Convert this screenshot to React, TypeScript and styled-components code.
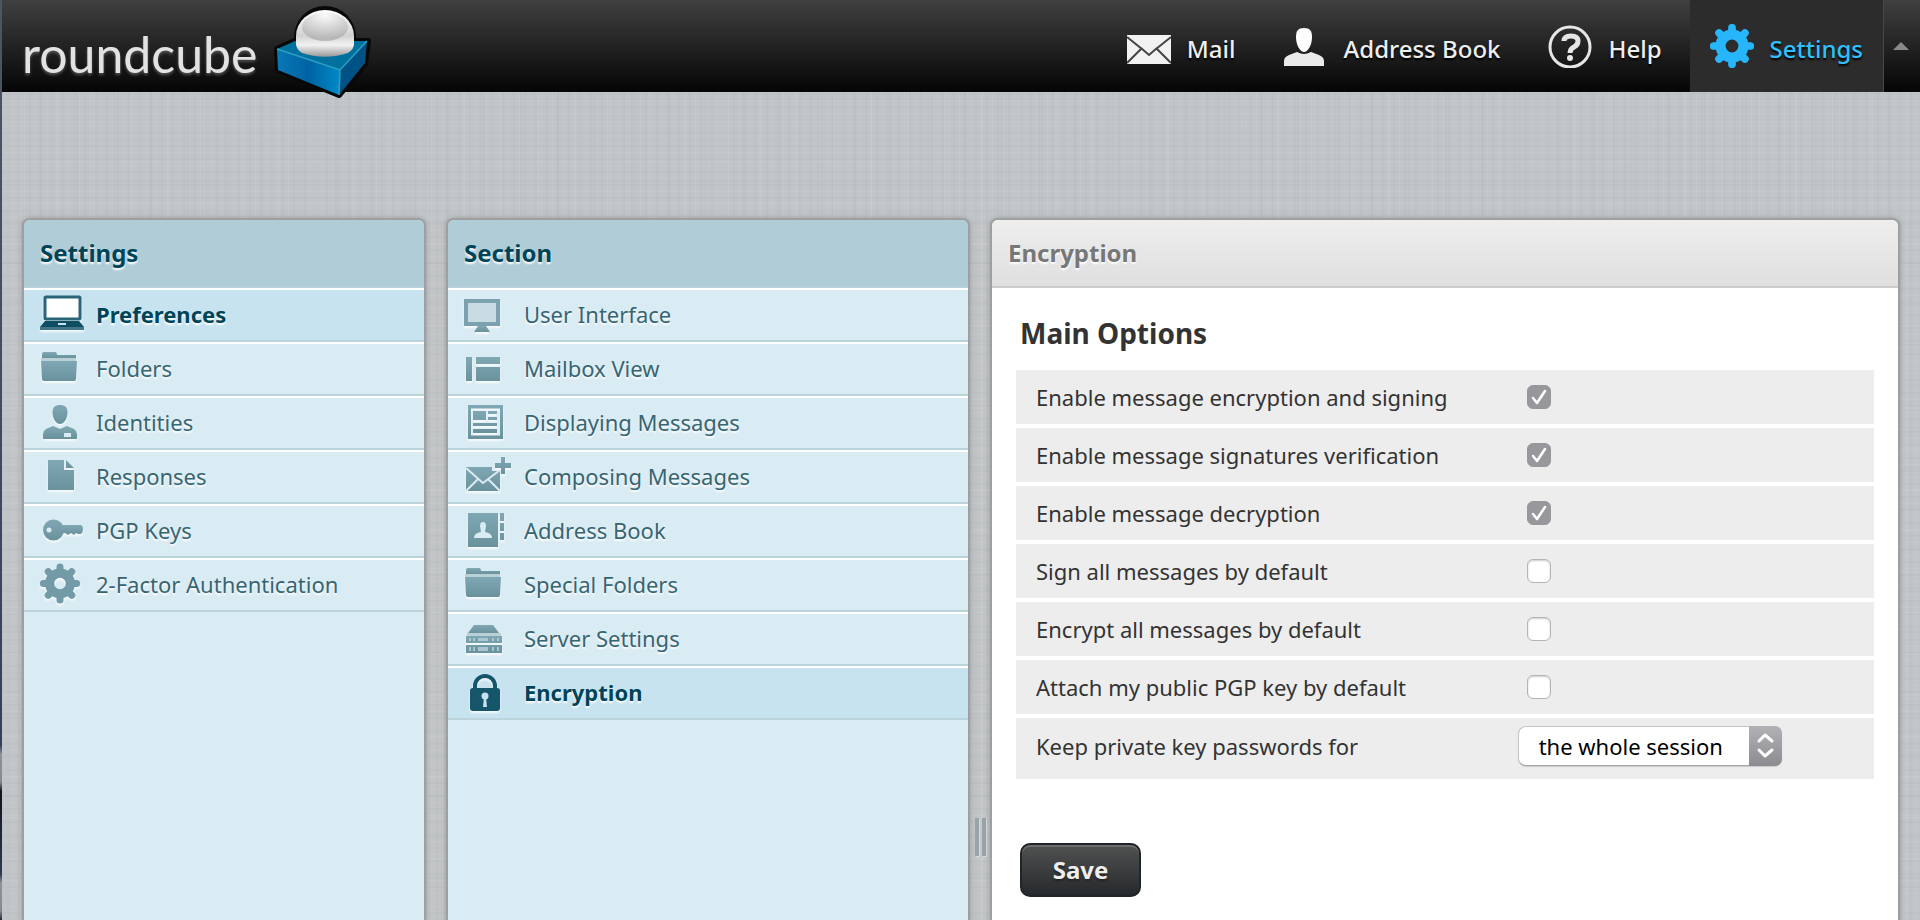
import React, { useState } from 'react';
import styled, { createGlobalStyle, css } from 'styled-components';

const sans = '"Noto Sans", "Open Sans", "Lucida Grande", sans-serif';

const GlobalStyle = createGlobalStyle`
  *, *::before, *::after { box-sizing: border-box; }
  body { margin: 0; font-family: ${sans}; font-size: 22px; color: #333; }
  a { text-decoration: none; color: inherit; }
  ul { list-style: none; margin: 0; padding: 0; }
  h1, h2 { margin: 0; }
`;

const Screen = styled.div`
  display: flex;
  height: 100vh;
  overflow: hidden;
`;

const DesktopEdge = styled.div`
  flex: 0 0 2px;
  background: linear-gradient(#4d5666 0%, #434c60 40%, #343f5c 81%, #8f9396 82%, #85898c 85%, #10141c 86%, #2c3a50 95%, #8f9396 96%, #85898c 99%, #20283a 100%);
`;

const Page = styled.div`
  flex: 1;
  min-width: 0;
  display: flex;
  flex-direction: column;
  background-color: #c1c5c8;
  background-image:
    repeating-linear-gradient(90deg, rgba(255, 255, 255, 0.05) 0 1px, transparent 1px 5px, rgba(90, 100, 110, 0.03) 5px 7px, transparent 7px 11px),
    repeating-linear-gradient(0deg, rgba(255, 255, 255, 0.05) 0 1px, transparent 1px 6px, rgba(90, 100, 110, 0.03) 6px 8px, transparent 8px 13px),
    repeating-linear-gradient(90deg, rgba(90, 100, 110, 0.03) 0 2px, transparent 2px 17px, rgba(255, 255, 255, 0.05) 17px 19px, transparent 19px 37px),
    repeating-linear-gradient(0deg, rgba(90, 100, 110, 0.03) 0 2px, transparent 2px 19px, rgba(255, 255, 255, 0.05) 19px 21px, transparent 21px 41px);
`;

const Header = styled.header`
  flex: 0 0 92px;
  display: flex;
  justify-content: space-between;
  background: linear-gradient(#404040, #050505);
`;

const LogoLink = styled.a`
  display: flex;
  align-items: flex-start;
  gap: 16px;
  height: 92px;
  padding: 4px 0 0 20px;
  font-family: Lato, sans-serif;
  font-size: 50px;
  color: #e2e2e2;
  text-shadow: 0 2px 3px #555;

  span { line-height: 100px; }
  svg { flex: none; }
`;

const Nav = styled.nav`
  display: flex;
  gap: 8px;
`;

const NavItem = styled.a<{ $active?: boolean }>`
  display: flex;
  align-items: center;
  gap: 16px;
  padding: 0 20px;
  font-size: 24px;
  font-weight: 500;
  line-height: 32px;
  color: #eee;
  text-shadow: 0 2px 2px #000;
  ${(p) => p.$active && css`
    background: #2c2c2c;
    color: #30c0fc;
    border-right: 1px solid #484848;
  `}
  span { padding-top: 6px; }
`;

const TopToggle = styled.button`
  width: 36px;
  margin-left: -8px;
  padding: 0 2px 0 0;
  border: 0;
  background: none;
`;

const Main = styled.main`
  flex: 1;
  min-height: 0;
  display: flex;
  padding: 128px 22px 0;
`;

const Panel = styled.section<{ $width?: string; $plain?: boolean }>`
  flex: ${(p) => (p.$width ? `0 0 ${p.$width}` : '1 1 0')};
  min-width: 0;
  border-radius: 6px 6px 0 0;
  background: ${(p) => (p.$plain ? '#fff' : '#d9ebf3')};
  box-shadow: 0 0 0 2px #a09fa0, 0 0 5px 2px rgba(110, 110, 110, 0.5);
`;

const PanelTitle = styled.h2<{ $plain?: boolean }>`
  height: 68px;
  padding: 0 16px;
  font-size: 24px;
  line-height: 66px;
  border-radius: 6px 6px 0 0;
  border-bottom: 2px solid ${(p) => (p.$plain ? '#ccc' : '#b8d0d9')};
  color: ${(p) => (p.$plain ? '#777' : '#004458')};
  background: ${(p) => (p.$plain ? 'linear-gradient(#eee, #dfdfdf)' : '#b0ccd7')};
  text-shadow: 0 2px 2px #fff;
`;

const Gap = styled.div`
  flex: 0 0 24px;
`;

const Splitter = styled(Gap)`
  display: flex;
  justify-content: center;
  gap: 3px;
  padding-top: 598px;
  cursor: col-resize;

  i {
    width: 4px;
    height: 38px;
    background: #98a3aa;
    box-shadow: 1px 1px 1px #d8dde0;
  }
`;

const ListLink = styled.a<{ $active?: boolean; $gap: number }>`
  display: flex;
  align-items: center;
  gap: ${(p) => p.$gap}px;
  height: 54px;
  padding: 0 16px 2px;
  line-height: 30px;
  border-top: 2px solid #fff;
  border-bottom: 2px solid #bbd3da;
  color: ${(p) => (p.$active ? '#004458' : '#376572')};
  background: ${(p) => (p.$active ? '#c7e3ef' : 'transparent')};
  font-weight: ${(p) => (p.$active ? 700 : 400)};
  text-shadow: 0 2px 2px #fff;
`;

const ListSvg = styled.svg`
  flex: none;
  overflow: visible;
  filter: drop-shadow(0 2px 1px rgba(255, 255, 255, 0.8));
`;

const Form = styled.form`
  padding: 24px 24px 0;
`;

const FormHeading = styled.h2`
  padding-left: 4px;
  font-size: 28px;
  line-height: 42px;
  margin-bottom: 16px;
`;

const Rows = styled.div`
  display: flex;
  flex-direction: column;
  gap: 4px;
`;

const Row = styled.div`
  display: grid;
  grid-template-columns: 57% 1fr;
  align-items: center;
  min-height: 54px;
  padding-left: 20px;
  background: #ededed;

  &:last-child {
    min-height: 61px;
    padding-bottom: 5px;
  }
`;

const Value = styled.div`
  display: flex;
  padding-left: 4px;
`;

const CheckWrap = styled.span`
  display: grid;
  margin-left: 9px;

  > * { grid-area: 1 / 1; }
  svg { pointer-events: none; }
`;

const CheckInput = styled.input`
  appearance: none;
  width: 24px;
  height: 24px;
  margin: 0;
  border: 1px solid #b4b4b4;
  border-radius: 6px;
  background: #fff;
  box-shadow: inset 0 1px 2px rgba(0, 0, 0, 0.2);

  &:checked {
    border-color: #98979c;
    background: #98979c;
    box-shadow: none;
  }
`;

const SelectWrap = styled.span`
  display: grid;
  width: 264px;

  > * { grid-area: 1 / 1; }
  svg { justify-self: end; pointer-events: none; }
`;

const SelectInput = styled.select`
  appearance: none;
  height: 40px;
  padding: 0 40px 0 20px;
  border: 1px solid #c4c4c4;
  border-bottom-color: #a8a8a8;
  border-radius: 8px;
  background: #fff;
  color: #000;
  font-family: ${sans};
  font-size: 22px;
  box-shadow: 0 1px 1px rgba(0, 0, 0, 0.15);
`;

const SaveButton = styled.button`
  margin: 64px 0 0 4px;
  width: 121px;
  height: 54px;
  padding: 0;
  border: 2px solid #1f2428;
  border-radius: 10px;
  background: linear-gradient(#505151, #26292b);
  box-shadow: inset 0 2px 0 #6d6d6d;
  color: #eee;
  font-family: ${sans};
  font-size: 24px;
  font-weight: 700;
  line-height: 32px;
  text-shadow: 0 2px 2px #222;
`;

const teeth = Array.from({ length: 8 }, (_, i) => (i * Math.PI) / 4);

const Gear = ({ cx, cy, r, color }: { cx: number; cy: number; r: number; color: string }) => (
  <g stroke={color} fill="none">
    <circle cx={cx} cy={cy} r={r * 0.52} strokeWidth={r * 0.46} />
    {teeth.map((a) => (
      <line
        key={a}
        x1={cx + Math.cos(a) * r * 0.6}
        y1={cy + Math.sin(a) * r * 0.6}
        x2={cx + Math.cos(a) * r * 0.83}
        y2={cy + Math.sin(a) * r * 0.83}
        strokeWidth={r * 0.35}
        strokeLinecap="round"
      />
    ))}
  </g>
);

const pale = '#d9ebf3';
const muted = 'url(#muted)';
const strong = '#15566b';

const Folder = (
  <g fill={muted}>
    <path d="M2 9V8q0-2 2-2h11q2 0 2 3h19v3H2z" />
    <path d="M1 12h35v3H1z" fill="#b9d0d7" />
    <path d="M1 15h36l-1 18q0 2-2 2H4q-2 0-2-2z" />
  </g>
);

const icons: Record<string, React.ReactNode> = {
  laptop: (
    <g>
      <rect x="5" y="5" width="35" height="22" rx="1" fill="#fff" stroke="#2b6578" strokeWidth="3" />
      <path d="M5 29h34l5 6v3H0v-3z" fill="#0f4e62" />
      <path d="M0 35h44v3H0z" fill="#427586" />
      <rect x="18" y="31" width="8" height="2" fill="#c7e3ef" />
    </g>
  ),
  folder: Folder,
  identity: (
    <g fill={muted}>
      <path d="M20 5c5 0 7.500 2 7.500 7c0 6-3 12-7.500 12s-7.500-6-7.500-12c0-5 2.500-7 7.500-7z" />
      <path d="M13 26l7 3 7-3 7 3q3 2 3 5v5H3v-5q0-3 3-5z" />
      <rect x="24" y="33" width="7" height="4" fill={pale} />
    </g>
  ),
  page: (
    <g fill={muted}>
      <path d="M8 6h16v10h10v20H8z" />
      <path d="M26 6l8 8h-8z" />
    </g>
  ),
  key: (
    <g fill={muted}>
      <circle cx="13.500" cy="22" r="10.500" />
      <path d="M21 17h20q2 1 2 4t-2 5h-3l-2-1-2 2-3-2-3 2-3-2h-4z" />
      <circle cx="9" cy="22" r="2.500" fill={pale} />
    </g>
  ),
  gear: <Gear cx={20} cy={21.5} r={20} color="#739ba7" />,
  monitor: (
    <g fill={muted}>
      <rect x="2" y="9" width="32" height="23" fill="#c9dce4" stroke="#7ba2ae" strokeWidth="4" />
      <path d="M14 34h8l4 6H10z" />
    </g>
  ),
  mailbox: (
    <g fill={muted}>
      <path d="M2 11h6v24H2zM12 11h24v7H12zM12 21h24v14H12z" />
    </g>
  ),
  article: (
    <g fill={muted}>
      <path fillRule="evenodd" d="M4 5h35v34H4zM7 8.500v27h29v-27z" />
      <path d="M9 11h13v9H9zM24 11h9v3h-9zM24 17h9v3h-9zM9 23h24v3H9zM9 29h24v4H9z" />
    </g>
  ),
  compose: (
    <g fill={muted}>
      <path d="M37 3h4v6h6v5h-6v6h-4v-6h-6V9h6z" />
      <path d="M2 13h26v4h8v20H2z" />
      <path d="M2 14l17 15 17-13M2 37l12-12M36 37L24 25" fill="none" stroke={pale} strokeWidth="2" />
    </g>
  ),
  contacts: (
    <g fill={muted}>
      <path d="M4 5h30v34H4zM36 5h4v8h-4zM36 15h4v8h-4zM36 25h4v7h-4z" />
      <path d="M19 14q3 0 3 4l-1 6q7 1 7 6H10q0-5 7-6l-1-6q0-4 3-4z" fill={pale} />
    </g>
  ),
  server: (
    <g fill={muted}>
      <path d="M10 9h19l6 8H4z" />
      <path d="M3 17h34v3H3z" fill="#b9d0d7" />
      <path d="M2 20h36v7H2zM2 29h36v8H2z" />
      <path d="M5 22h2v3H5zM9 22h2v3H9zM14 22h10v3H14zM28 22h2v3h-2zM33 22h2v3h-2zM5 31h2v4H5zM9 31h2v4H9zM14 31h10v4H14zM28 31h2v4h-2zM33 31h2v4h-2z" fill="#a9c6d0" />
    </g>
  ),
  lock: (
    <g>
      <path d="M11 21v-5a10 10 0 0 1 20 0v5" fill="none" stroke={strong} strokeWidth="4" />
      <rect x="6" y="18" width="30" height="23" rx="3" fill={strong} />
      <circle cx="21" cy="26" r="3.500" fill="#c7e3ef" />
      <path d="M20 27h2l1 10h-4z" fill="#c7e3ef" />
    </g>
  ),
};

const ListIcon = ({ name }: { name: string }) => (
  <ListSvg width="44" height="44" viewBox="0 0 44 44" aria-hidden="true">
    {icons[name]}
  </ListSvg>
);

const CubeSvg = styled.svg`
  overflow: visible;
`;

const Cube = () => (
  <CubeSvg width="100" height="98" viewBox="274 4 100 98" aria-hidden="true">
    <defs>
      <linearGradient id="dome" x1="0" y1="0" x2="0" y2="1">
        <stop offset="0" stopColor="#fff" />
        <stop offset=".55" stopColor="#d2d2d2" />
        <stop offset=".75" stopColor="#f2f2f2" />
        <stop offset="1" stopColor="#999" />
      </linearGradient>
      <radialGradient id="gloss" cx=".5" cy=".1" r=".8">
        <stop offset="0" stopColor="#fafafa" />
        <stop offset="1" stopColor="#b8b8b8" />
      </radialGradient>
      <linearGradient id="leftFace" x1="0" y1="0" x2="1" y2="0">
        <stop offset="0" stopColor="#0a78b6" />
        <stop offset=".5" stopColor="#0063a3" />
        <stop offset="1" stopColor="#0089c6" />
      </linearGradient>
    </defs>
    <path d="M278 49l18-8 73 0-3 23-26 31-61-25z" fill="#080808" stroke="#080808" strokeWidth="6" strokeLinejoin="round" />
    <circle cx="326" cy="37" r="31" fill="#080808" />
    <path d="M278 49l18-8h72l-27 29z" fill="#00719f" />
    <path d="M278 49l63 21-1 25-61-25z" fill="url(#leftFace)" />
    <path d="M368 41l-27 29-1 25 26-32z" fill="#005284" />
    <path d="M278 49l63 21 27-29M341 70l-1 25" fill="none" stroke="#2da0c4" strokeWidth="1.500" />
    <path d="M297 36a29 26 0 0 1 58 0v8q0 5-6 9a40 20 0 0 1-46 0q-6-4-6-9z" fill="url(#dome)" />
    <ellipse cx="326" cy="27" rx="23" ry="14" fill="url(#gloss)" />
  </CubeSvg>
);

const MailIcon = () => (
  <svg width="44" height="44" viewBox="0 0 44 44" aria-hidden="true">
    <rect x="0" y="11" width="44" height="29" fill="#f2f2f2" />
    <path d="M0 13l15 12M44 13L29 25M0 39l14-14M44 39L30 25M14 24l8 7 8-7" fill="none" stroke="#444" strokeWidth="2" />
  </svg>
);

const PersonIcon = () => (
  <svg width="44" height="44" viewBox="0 0 44 44" aria-hidden="true">
    <path d="M20 4c6 0 8 3 8 9 0 8-4 15-8 15s-8-7-8-15c0-6 2-9 8-9z" fill="#fff" />
    <path d="M13 28q4 2 7 2t7-2l8 3q5 2 5 6v5H0v-5q0-4 5-6z" fill="#eaeaea" />
  </svg>
);

const HelpIcon = () => (
  <svg width="44" height="44" viewBox="0 0 44 44" aria-hidden="true">
    <circle cx="22" cy="23" r="20" fill="none" stroke="#e6e6e6" strokeWidth="3" />
    <path d="M16 17q0-5 7-5t7 5q0 4-4 6t-4 6" fill="none" stroke="#e6e6e6" strokeWidth="5" />
    <circle cx="22" cy="34" r="3" fill="#e6e6e6" />
  </svg>
);

const settings = [
  ['Preferences', 'laptop'],
  ['Folders', 'folder'],
  ['Identities', 'identity'],
  ['Responses', 'page'],
  ['PGP Keys', 'key'],
  ['2-Factor Authentication', 'gear'],
];

const sections = [
  ['User Interface', 'monitor'],
  ['Mailbox View', 'mailbox'],
  ['Displaying Messages', 'article'],
  ['Composing Messages', 'compose'],
  ['Address Book', 'contacts'],
  ['Special Folders', 'folder'],
  ['Server Settings', 'server'],
  ['Encryption', 'lock'],
];

const List = ({ items, active, gap }: { items: string[][]; active: string; gap: number }) => (
  <ul>
    {items.map(([label, icon]) => (
      <li key={label}>
        <ListLink href="#" $active={label === active} $gap={gap}>
          <ListIcon name={icon} />
          {label}
        </ListLink>
      </li>
    ))}
  </ul>
);

const CheckRow = ({ id, label, initial }: { id: string; label: string; initial: boolean }) => {
  const [on, setOn] = useState(initial);
  return (
    <Row>
      <label htmlFor={id}>{label}</label>
      <Value>
        <CheckWrap>
          <CheckInput id={id} type="checkbox" checked={on} onChange={() => setOn(!on)} />
          {on && (
            <svg width="24" height="24" viewBox="0 0 24 24" aria-hidden="true">
              <path d="M6 13l4 5 8-12" fill="none" stroke="#fff" strokeWidth="2.500" strokeLinecap="round" strokeLinejoin="round" />
            </svg>
          )}
        </CheckWrap>
      </Value>
    </Row>
  );
};

const Defs = styled.svg`
  position: absolute;
`;

export default function App() {
  return (
    <Screen>
      <GlobalStyle />
      <Defs width="0" height="0" aria-hidden="true">
        <linearGradient id="muted" x1="0" y1="0" x2="0" y2="1">
          <stop offset="0" stopColor="#80a8b4" />
          <stop offset="1" stopColor="#6a929d" />
        </linearGradient>
      </Defs>
      <DesktopEdge />
      <Page>
        <Header>
          <LogoLink href="#">
            <span>roundcube</span>
            <Cube />
          </LogoLink>
          <Nav>
            <NavItem href="#"><MailIcon /><span>Mail</span></NavItem>
            <NavItem href="#"><PersonIcon /><span>Address Book</span></NavItem>
            <NavItem href="#"><HelpIcon /><span>Help</span></NavItem>
            <NavItem href="#" $active>
              <svg width="44" height="44" viewBox="0 0 44 44" aria-hidden="true">
                <Gear cx={22} cy={22} r={22} color="#27b5fb" />
              </svg>
              <span>Settings</span>
            </NavItem>
            <TopToggle type="button" aria-label="Toggle header">
              <svg width="16" height="10" viewBox="0 0 16 10" aria-hidden="true">
                <path d="M0 9l8-8 8 8z" fill="#8a8a8a" />
              </svg>
            </TopToggle>
          </Nav>
        </Header>
        <Main>
          <Panel $width="400px">
            <PanelTitle>Settings</PanelTitle>
            <List items={settings} active="Preferences" gap={12} />
          </Panel>
          <Gap />
          <Panel $width="520px">
            <PanelTitle>Section</PanelTitle>
            <List items={sections} active="Encryption" gap={16} />
          </Panel>
          <Splitter><i /><i /></Splitter>
          <Panel $plain>
            <PanelTitle $plain>Encryption</PanelTitle>
            <Form onSubmit={(e) => e.preventDefault()}>
              <FormHeading>Main Options</FormHeading>
              <Rows>
                <CheckRow id="encryption" label="Enable message encryption and signing" initial />
                <CheckRow id="signatures" label="Enable message signatures verification" initial />
                <CheckRow id="decryption" label="Enable message decryption" initial />
                <CheckRow id="sign-all" label="Sign all messages by default" initial={false} />
                <CheckRow id="encrypt-all" label="Encrypt all messages by default" initial={false} />
                <CheckRow id="attach-key" label="Attach my public PGP key by default" initial={false} />
                <Row>
                  <label htmlFor="keep-for">Keep private key passwords for</label>
                  <Value>
                    <SelectWrap>
                      <SelectInput id="keep-for" defaultValue="session">
                        <option value="session">the whole session</option>
                      </SelectInput>
                      <svg width="33" height="40" viewBox="0 0 33 40" aria-hidden="true">
                        <defs>
                          <linearGradient id="stepper" x1="0" y1="0" x2="0" y2="1">
                            <stop offset="0" stopColor="#b2b1b6" />
                            <stop offset="1" stopColor="#8c8b90" />
                          </linearGradient>
                        </defs>
                        <path d="M0 0h25q8 0 8 8v24q0 8-8 8H0z" fill="url(#stepper)" />
                        <path d="M10 15l6-6 7 6M10 24l6 6 7-6" fill="none" stroke="#fff" strokeWidth="3" strokeLinecap="round" strokeLinejoin="round" />
                      </svg>
                    </SelectWrap>
                  </Value>
                </Row>
              </Rows>
              <SaveButton type="submit">Save</SaveButton>
            </Form>
          </Panel>
        </Main>
      </Page>
    </Screen>
  );
}
